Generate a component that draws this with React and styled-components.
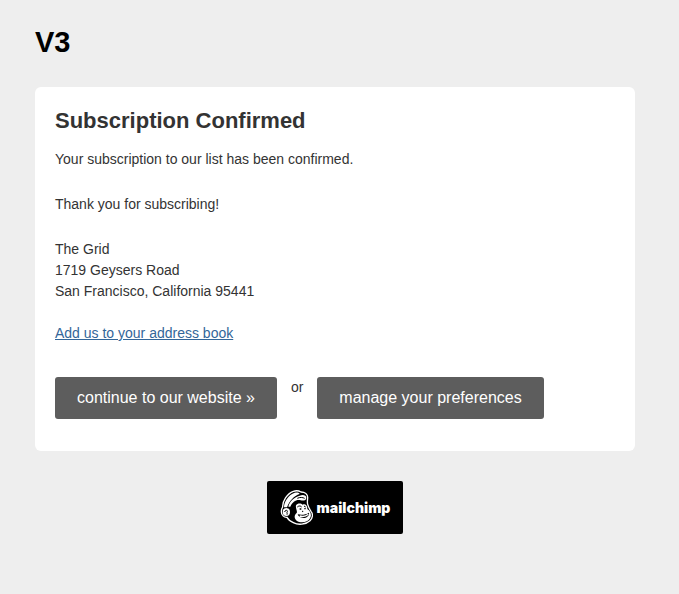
import React from 'react'
import styled, { createGlobalStyle } from 'styled-components';

const GlobalStyle = createGlobalStyle`
    * {
        box-sizing: border-box;
    }

    body {
        margin: 0;
        background: #eeeeee;
        color: #333333;
        font-family: 'Liberation Sans', Helvetica, Arial, sans-serif;
        font-size: 14px;
        line-height: 21px;
    }
`;

const Page = styled.div`
    display: flex;
    flex-direction: column;
    align-items: center;
    padding: 24px 44px 60px 35px;
`;

const Title = styled.h1`
    width: 100%;
    max-width: 600px;
    margin: 0 0 27px;
    color: #000000;
    font-size: 29px;
    line-height: 36px;
`;

const Card = styled.main`
    width: 100%;
    max-width: 600px;
    padding: 20px 20px 32px;
    background: #ffffff;
    border-radius: 6px;
`;

const Heading = styled.h2`
    margin: 0 0 14px;
    font-size: 22px;
    line-height: 28px;
`;

const Text = styled.p`
    margin: 0 0 24px;
`;

const Address = styled.address`
    margin: 0 0 21px;
    font-style: normal;
`;

const Link = styled.a`
    color: #336699;
`;

const Actions = styled.div`
    display: flex;
    flex-wrap: wrap;
    align-items: flex-start;
    gap: 14px;
    margin-top: 33px;
`;

const Button = styled.a`
    padding: 0 22px;
    background: #5d5d5d;
    border-radius: 3px;
    color: #ffffff;
    font-size: 16px;
    line-height: 42px;
    text-decoration: none;
`;

const Badge = styled.a`
    display: flex;
    align-items: center;
    gap: 4px;
    height: 53px;
    margin-top: 30px;
    padding: 0 13px;
    background: #000000;
    border-radius: 2px;
    color: #ffffff;
    font-family: Inter, sans-serif;
    font-size: 14px;
    font-weight: 900;
    text-decoration: none;
`;

const Freddie = () => (
    <svg width="33" height="35" viewBox="15 10 99 105" fill="none" aria-hidden="true">
        {/* outline */}
        <path
            d="M36 92C27 93 19 85 19 75C19 68 21 64 23 61C22 44 36 21 55 14C64 11 73 13 78 16C90 16 98 23 98 32C98 40 96 46 98 53C100 60 103 66 108 74C115 82 113 95 105 102C92 114 70 116 55 108C45 103 39 98 36 92Z"
            stroke="#ffffff"
            strokeWidth="4"
        />
        {/* cap and brim */}
        <path d="M27 62C27 45 41 24 59 18C67 16 74 18 74 22C57 28 43 42 36 62Z" fill="#ffffff" />
        <path d="M40 60C43 45 56 32 74 27C84 23 94 26 94 33C94 41 86 43 77 41C63 38 53 46 46 60Z" fill="#ffffff" />
        <path d="M67 35C75 31 83 32 89 35" stroke="#000000" strokeWidth="3" />
        {/* ear */}
        <ellipse cx="34" cy="76" rx="11" ry="12" fill="#ffffff" />
        <path d="M29 76C30 69 39 70 37 75C34 78 38 80 36 84" stroke="#000000" strokeWidth="3" />
        {/* face */}
        <path
            d="M63 56C67 49 78 49 83 54C91 50 98 58 97 67C107 74 111 86 105 95C99 107 77 111 65 102C56 95 58 84 65 79C68 73 61 66 63 56Z"
            fill="#ffffff"
        />
        <path d="M67 61C71 57 77 57 80 61M87 58L92 61" stroke="#000000" strokeWidth="3" />
        <path d="M74 67H79M88 66H92M82 73L84 75" stroke="#000000" strokeWidth="4" />
        {/* smile */}
        <path d="M68 83C80 86 92 84 102 78C104 88 93 95 83 94C76 93 70 90 68 83Z" fill="#000000" />
        <path d="M74 88C84 91 93 89 100 83" stroke="#ffffff" strokeWidth="4" />
    </svg>
);

export default function App() {
    return (
        <Page>
            <GlobalStyle />
            <Title>V3</Title>
            <Card>
                <Heading>Subscription Confirmed</Heading>
                <Text>Your subscription to our list has been confirmed.</Text>
                <Text>Thank you for subscribing!</Text>
                <Address>
                    The Grid<br />
                    1719 Geysers Road<br />
                    San Francisco, California 95441
                </Address>
                <Link href="#address-book">Add us to your address book</Link>
                <Actions>
                    <Button href="#website">continue to our website »</Button>
                    <span>or</span>
                    <Button href="#preferences">manage your preferences</Button>
                </Actions>
            </Card>
            <Badge href="#mailchimp">
                <Freddie />
                mailchimp
            </Badge>
        </Page>
    )
}
